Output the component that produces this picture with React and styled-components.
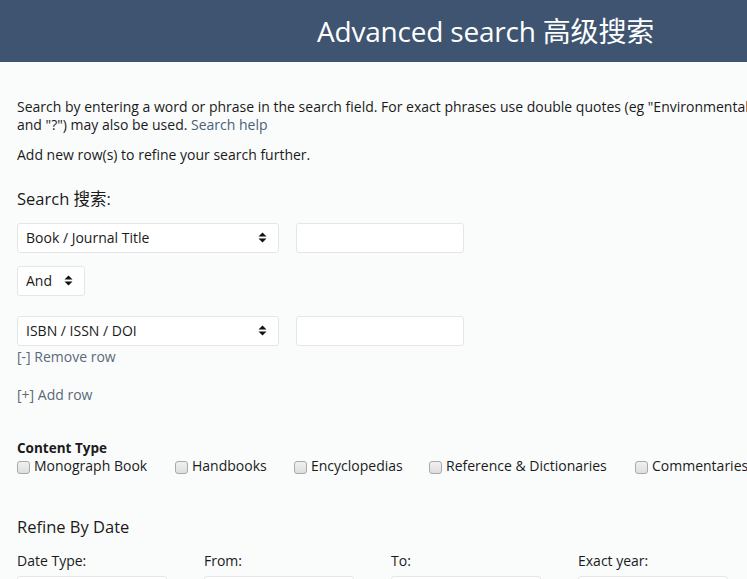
import React from "react";
import styled, { createGlobalStyle } from "styled-components";

const Global = createGlobalStyle`
  html, body { margin: 0; padding: 0; }
  body {
    background: #fafcfc;
    font-family: "Open Sans", "Noto Sans CJK SC", sans-serif;
    color: #1a1a1a;
    overflow: hidden;
  }
`;

const Page = styled.div`
  width: 747px;
  height: 579px;
  overflow: hidden;
`;

const Header = styled.header`
  height: 62px;
  background: #3e5470;
  display: flex;
  align-items: center;
  padding-left: 317px;
`;

const Title = styled.h1`
  margin: 0 0 2px;
  font-size: 28px;
  font-weight: 400;
  color: #fff;
  white-space: nowrap;
  letter-spacing: -0.2px;
`;

const Content = styled.main`
  padding: 36px 0 0 17px;
  font-size: 14px;
`;

const Intro = styled.p`
  margin: 0;
  line-height: 18px;
  white-space: nowrap;
`;

const Link = styled.a`
  color: #4a5f78;
  text-decoration: none;
`;

const Note = styled.p`
  margin: 12px 0 0;
  line-height: 18px;
`;

const SectionTitle = styled.h2`
  margin: ${(p) => p.$mt || 0}px 0 0;
  font-size: 16.5px;
  font-weight: 400;
  line-height: 22px;
`;

const FieldRow = styled.div`
  display: flex;
  gap: 17px;
  margin-top: ${(p) => p.$mt || 0}px;
`;

const SelectBox = styled.div`
  box-sizing: border-box;
  width: ${(p) => p.$w}px;
  height: 30px;
  background: #fff;
  border: 1px solid #e4e6e8;
  border-radius: 3px;
  display: flex;
  align-items: center;
  justify-content: space-between;
  padding: 0 11px 1px 8px;
  font-size: 14px;
`;

const TextBox = styled.div`
  box-sizing: border-box;
  width: ${(p) => p.$w}px;
  height: 30px;
  background: #fff;
  border: 1px solid #e4e6e8;
  border-radius: 3px;
`;

const RowLink = styled.div`
  margin-top: ${(p) => p.$mt}px;
  color: #5a6878;
  font-size: 14px;
  line-height: 18px;
`;

const Bold = styled.div`
  margin-top: 36px;
  font-weight: 700;
  font-size: 13.5px;
  line-height: 17px;
`;

const Checks = styled.div`
  display: flex;
  align-items: center;
`;

const CheckItem = styled.label`
  display: flex;
  align-items: center;
  gap: 4px;
  width: ${(p) => p.$w}px;
  font-size: 14px;
  line-height: 18px;
  white-space: nowrap;
  flex-shrink: 0;
`;

const Box = styled.span`
  box-sizing: border-box;
  width: 13px;
  height: 13px;
  border: 1px solid #a9a9a9;
  border-radius: 3px;
  background: linear-gradient(#f0f0f0, #dedede);
  margin-top: 2px;
`;

const DateGrid = styled.div`
  display: grid;
  grid-template-columns: repeat(4, 187px);
  margin-top: 14px;
  row-gap: 6px;
`;

const Label = styled.div`
  font-size: 14px;
  line-height: 18px;
`;

const DateBox = styled.div`
  box-sizing: border-box;
  width: 150px;
  height: 30px;
  background: #fff;
  border: 1px solid #e4e6e8;
  border-radius: 3px;
`;

const Arrows = () => (
  <svg width="9" height="11" viewBox="0 0 9 11">
    <path d="M4.5 0.5 L8.5 4.5 H0.5 Z M4.5 10.5 L8.5 6.5 H0.5 Z" fill="#111" />
  </svg>
);

const Select = ({ w, children }) => (
  <SelectBox $w={w}>
    <span>{children}</span>
    <Arrows />
  </SelectBox>
);

export default function App() {
  const types = [
    ["Monograph Book", 158],
    ["Handbooks", 119],
    ["Encyclopedias", 135],
    ["Reference & Dictionaries", 206],
    ["Commentaries", 140],
  ];
  return (
    <Page>
      <Global />
      <Header>
        <Title>Advanced search 高级搜索</Title>
      </Header>
      <Content>
        <Intro>
          Search by entering a word or phrase in the search field. For exact phrases use double quotes (eg "Environmental
          <br />
          and "?") may also be used. <Link href="#">Search help</Link>
        </Intro>
        <Note>Add new row(s) to refine your search further.</Note>
        <SectionTitle $mt={24}>Search 搜索:</SectionTitle>
        <FieldRow $mt={13}>
          <Select w={262}>Book / Journal Title</Select>
          <TextBox $w={168} />
        </FieldRow>
        <FieldRow $mt={13}>
          <Select w={68}>And</Select>
        </FieldRow>
        <FieldRow $mt={20}>
          <Select w={262}>ISBN / ISSN / DOI</Select>
          <TextBox $w={168} />
        </FieldRow>
        <RowLink $mt={2}>[-] Remove row</RowLink>
        <RowLink $mt={20}>[+] Add row</RowLink>
        <Bold>Content Type</Bold>
        <Checks>
          {types.map(([t, w]) => (
            <CheckItem key={t} $w={w}>
              <Box />
              {t}
            </CheckItem>
          ))}
        </Checks>
        <SectionTitle $mt={41}>Refine By Date</SectionTitle>
        <DateGrid>
          <Label>Date Type:</Label>
          <Label>From:</Label>
          <Label>To:</Label>
          <Label>Exact year:</Label>
          <DateBox />
          <DateBox />
          <DateBox />
          <DateBox />
        </DateGrid>
      </Content>
    </Page>
  );
}
